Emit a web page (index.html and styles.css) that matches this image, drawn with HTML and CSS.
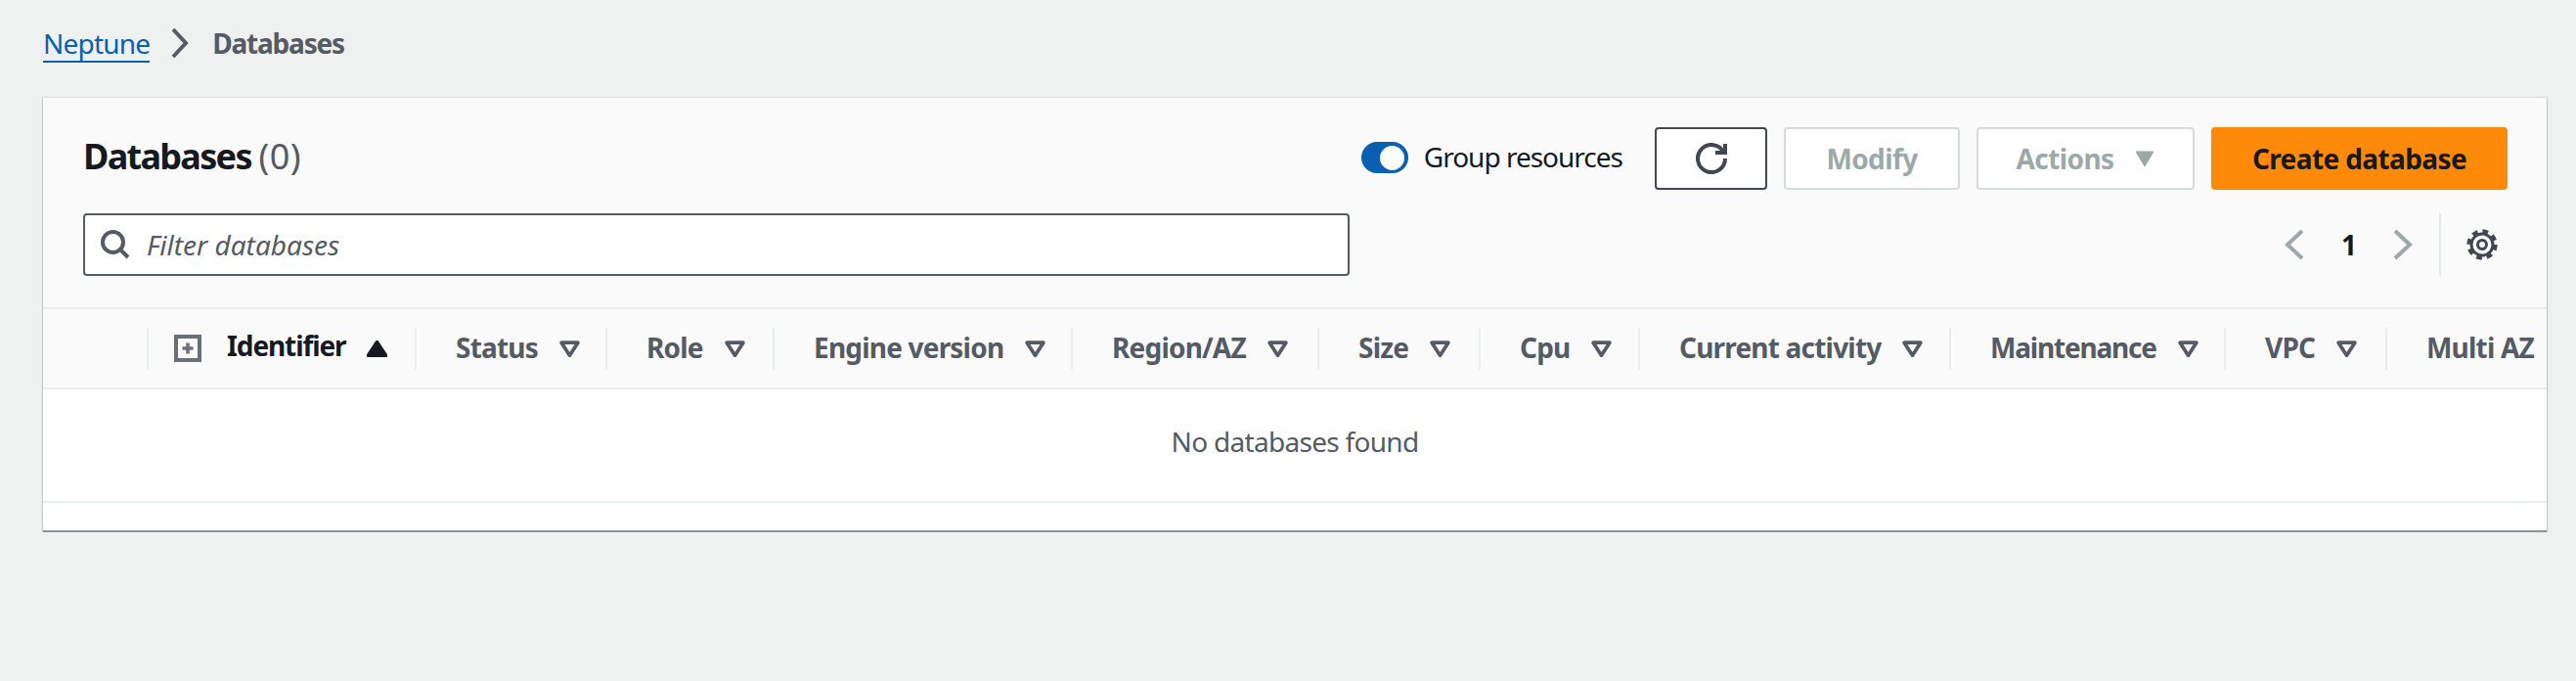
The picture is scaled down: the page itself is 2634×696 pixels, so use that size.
FILE: index.html
```html
<!DOCTYPE html>
<html lang="en">
<head>
    <meta charset="UTF-8" />
    <title>Databases</title>
    <link rel="stylesheet" href="styles.css">
</head>
<body>
    <nav class="crumbs">
        <a class="crumb-link" href="#">Neptune</a>
        <svg class="crumb-sep" viewBox="0 0 18 32"><path d="M2 2l13 14L2 30" /></svg>
        <span class="crumb-now">Databases</span>
    </nav>

    <div class="card">
        <div class="card-head">
            <div class="head-row">
                <h1 class="title">Databases <span class="count">(0)</span></h1>
                <div class="actions">
                    <label class="toggle-wrap">
                        <span class="toggle"><span class="knob"></span></span>
                        <span class="toggle-label">Group resources</span>
                    </label>
                    <button class="btn btn-refresh">
                        <svg class="icon-refresh" viewBox="0 0 32 32"><path d="M20 10h10V1" /><path d="M30 16a14 14 0 1 1-1.400-6.100" /></svg>
                    </button>
                    <button class="btn btn-modify" disabled>Modify</button>
                    <button class="btn btn-actions" disabled>Actions
                        <svg class="caret" viewBox="0 0 20 17"><path d="M1 1h18l-9 15z" /></svg>
                    </button>
                    <button class="btn btn-create">Create database</button>
                </div>
            </div>
            <div class="head-row">
                <div class="filter">
                    <svg class="icon-search" viewBox="0 0 30 30"><circle cx="12.500" cy="12.500" r="10.500" /><path d="M20 20l8 8" /></svg>
                    <span>Filter databases</span>
                </div>
                <div class="pager">
                    <svg class="chev" viewBox="0 0 32 32"><path d="M24 2L9 16l15 14" /></svg>
                    <span class="page-num">1</span>
                    <svg class="chev" viewBox="0 0 32 32"><path d="M8 2l15 14L8 30" /></svg>
                    <span class="pager-gear">
                        <svg class="icon-gear" viewBox="0 0 32 32">
                            <circle class="gear-teeth" cx="16" cy="16" r="13.700" />
                            <circle class="gear-ring" cx="16" cy="16" r="11" />
                            <circle class="gear-hub" cx="16" cy="16" r="4.500" />
                        </svg>
                    </span>
                </div>
            </div>
        </div>

        <table class="db-table">
            <thead>
                <tr>
                    <th class="col-select"></th>
                    <th class="col-id">
                        <div class="th-in th-first">
                            <svg class="icon-expand" viewBox="0 0 28 28"><rect x="2" y="2" width="24" height="24" /><path d="M14 8.500v11M8.500 14h11" /></svg>
                            <span class="id-label">Identifier</span>
                            <svg class="sort sort-on" viewBox="0 0 20 16"><path d="M10 1.500L18.500 14.500h-17z" /></svg>
                        </div>
                    </th>
                    <th class="col-status"><div class="th-in"><span class="th-label">Status</span> <svg class="sort" viewBox="0 0 20 16"><path d="M2 2h16l-8 12.500z" /></svg></div></th>
                    <th class="col-role"><div class="th-in"><span class="th-label">Role</span> <svg class="sort" viewBox="0 0 20 16"><path d="M2 2h16l-8 12.500z" /></svg></div></th>
                    <th class="col-engine"><div class="th-in"><span class="th-label">Engine version</span> <svg class="sort" viewBox="0 0 20 16"><path d="M2 2h16l-8 12.500z" /></svg></div></th>
                    <th class="col-region"><div class="th-in"><span class="th-label">Region/AZ</span> <svg class="sort" viewBox="0 0 20 16"><path d="M2 2h16l-8 12.500z" /></svg></div></th>
                    <th class="col-size"><div class="th-in"><span class="th-label">Size</span> <svg class="sort" viewBox="0 0 20 16"><path d="M2 2h16l-8 12.500z" /></svg></div></th>
                    <th class="col-cpu"><div class="th-in"><span class="th-label">Cpu</span> <svg class="sort" viewBox="0 0 20 16"><path d="M2 2h16l-8 12.500z" /></svg></div></th>
                    <th class="col-activity"><div class="th-in"><span class="th-label">Current activity</span> <svg class="sort" viewBox="0 0 20 16"><path d="M2 2h16l-8 12.500z" /></svg></div></th>
                    <th class="col-maint"><div class="th-in"><span class="th-label">Maintenance</span> <svg class="sort" viewBox="0 0 20 16"><path d="M2 2h16l-8 12.500z" /></svg></div></th>
                    <th class="col-vpc"><div class="th-in"><span class="th-label">VPC</span> <svg class="sort" viewBox="0 0 20 16"><path d="M2 2h16l-8 12.500z" /></svg></div></th>
                    <th class="col-multi"><div class="th-in"><span class="th-label">Multi AZ</span></div></th>
                </tr>
            </thead>
            <tbody>
                <tr>
                    <td class="empty" colspan="12">No databases found</td>
                </tr>
            </tbody>
        </table>
        <div class="card-foot"></div>
    </div>
</body>
</html>
```

FILE: styles.css
```css
body {
    font-family: "Noto Sans", "Open Sans", sans-serif;
    font-size: 28px;
    letter-spacing: -1px;
    background-color: #eff1f1;
    margin: 0;
    padding: 24px 30px 0 44px;
    color: #16191f;
}

.crumbs {
    display: flex;
    align-items: center;
    height: 40px;
    margin-bottom: 36px;
    line-height: 40px;
}
.crumb-link {
    color: #0b5fb0;
    text-decoration: none;
    border-bottom: 2px solid #0b5fb0;
    height: 38px;
    letter-spacing: -0.8px;
}
.crumb-sep {
    width: 18px;
    height: 32px;
    margin: 0 24px 0 22px;
    fill: none;
    stroke: #545b64;
    stroke-width: 4;
}
.crumb-now {
    color: #545b64;
    font-weight: 700;
    letter-spacing: -1.2px;
}

.card {
    width: 2560px;
    background-color: #fff;
    border-bottom: 2px solid #879596;
    overflow: hidden;
    box-shadow: 0 1px 1px 0 rgba(0, 28, 36, 0.2), 1px 0 1px 0 rgba(0, 28, 36, 0.15), -1px 0 1px 0 rgba(0, 28, 36, 0.15), 0 -2px 0 0 #e9eceb;
}
.card-head {
    background-color: #fafafa;
    padding: 30px 40px 32px 41px;
    border-bottom: 2px solid #eaeded;
}
.head-row {
    display: flex;
    justify-content: space-between;
    align-items: center;
    height: 64px;
}
.head-row + .head-row {
    margin-top: 24px;
}
.title {
    font-size: 36px;
    font-weight: 700;
    letter-spacing: -1.7px;
    margin: 0;
    padding-bottom: 6px;
}
.count {
    font-weight: 400;
    letter-spacing: 0.5px;
    color: #545b64;
}

.actions {
    display: flex;
    align-items: center;
    gap: 17px;
}
.toggle-wrap {
    display: flex;
    align-items: center;
    gap: 16px;
    margin-right: 16px;
}
.toggle-label {
    padding-bottom: 4px;
}
.toggle {
    display: flex;
    justify-content: flex-end;
    align-items: center;
    width: 48px;
    height: 32px;
    margin-bottom: 2px;
    padding-right: 4px;
    box-sizing: border-box;
    border-radius: 16px;
    background-color: #0b5fb0;
}
.knob {
    width: 25px;
    height: 25px;
    border-radius: 50%;
    background-color: #fff;
}

.btn {
    display: flex;
    align-items: center;
    justify-content: center;
    height: 64px;
    padding: 0;
    font-family: inherit;
    font-size: 28px;
    font-weight: 700;
    letter-spacing: -0.6px;
    background-color: #fff;
    border: 2px solid #d5dbdb;
    border-radius: 4px;
    color: #9ca9a9;
}
.btn-refresh {
    width: 115px;
    border-color: #414750;
}
.icon-refresh {
    width: 32px;
    height: 32px;
    fill: none;
    stroke: #414750;
    stroke-width: 4;
}
.btn-modify {
    width: 180px;
}
.btn-actions {
    width: 223px;
    gap: 22px;
}
.caret {
    width: 20px;
    height: 17px;
    fill: #9ca9a9;
    stroke: #9ca9a9;
    stroke-width: 1;
    stroke-linejoin: round;
}
.btn-create {
    width: 303px;
    background-color: #ff8a0a;
    border-color: #ff8a0a;
    color: #16191f;
}

.filter {
    display: flex;
    align-items: center;
    gap: 17px;
    box-sizing: border-box;
    width: 1295px;
    height: 64px;
    padding-left: 16px;
    background-color: #fff;
    border: 2px solid #545b64;
    border-radius: 4px;
    color: #545b64;
    font-style: italic;
    letter-spacing: 0;
}
.icon-search {
    width: 30px;
    height: 30px;
    fill: none;
    stroke: #545b64;
    stroke-width: 4;
}

.pager {
    display: flex;
    align-items: center;
    margin-right: 10px;
}
.chev {
    width: 32px;
    height: 32px;
    fill: none;
    stroke: #9ca9a9;
    stroke-width: 4;
}
.page-num {
    width: 79px;
    text-align: center;
    font-weight: 700;
}
.pager-gear {
    display: flex;
    align-items: center;
    height: 64px;
    margin-left: 21px;
    padding-left: 26px;
    border-left: 2px solid #e4e8e8;
}
.icon-gear {
    width: 32px;
    height: 32px;
    fill: none;
    stroke: #414750;
}
.gear-teeth {
    stroke-width: 4;
    stroke-dasharray: 5.800 4.960;
}
.gear-ring {
    stroke-width: 3;
}
.gear-hub {
    stroke-width: 3;
}

.db-table {
    width: 2560px;
    table-layout: fixed;
    border-collapse: separate;
    border-spacing: 0;
}
.db-table th {
    height: 80px;
    padding: 0;
    background-color: #fafafa;
    border-bottom: 2px solid #eaeded;
    color: #545b64;
    font-weight: 700;
    letter-spacing: -0.8px;
    text-align: left;
    white-space: nowrap;
}
.db-table .col-maint {
    letter-spacing: -1.2px;
}
.th-in {
    display: flex;
    align-items: center;
    gap: 22px;
    height: 43px;
    padding-left: 40px;
    border-left: 2px solid #eaeded;
}
.th-label {
    padding-bottom: 3px;
}
.th-first {
    padding-left: 26px;
    color: #16191f;
}
.id-label {
    margin-left: 4px;
    padding-bottom: 6px;
    letter-spacing: -1.1px;
}
.icon-expand {
    width: 28px;
    height: 28px;
    fill: none;
    stroke: #687078;
    stroke-width: 4;
}
.icon-expand path {
    stroke-width: 3.500;
}
.sort {
    flex: none;
    width: 21px;
    height: 17px;
    fill: none;
    stroke: #545b64;
    stroke-width: 3.500;
    stroke-linejoin: round;
}
.sort-on {
    fill: #16191f;
    stroke: #16191f;
}

.col-select { width: 106px; }
.col-id { width: 274px; }
.col-status { width: 195px; }
.col-role { width: 171px; }
.col-engine { width: 305px; }
.col-region { width: 252px; }
.col-size { width: 165px; }
.col-cpu { width: 163px; }
.col-activity { width: 318px; }
.col-maint { width: 281px; }
.col-vpc { width: 165px; }
.col-multi { width: 165px; }

.empty {
    height: 105px;
    padding: 0 0 9px;
    text-align: center;
    color: #545b64;
    letter-spacing: -0.7px;
    border-bottom: 2px solid #eaeded;
}
.card-foot {
    height: 28px;
}
```
